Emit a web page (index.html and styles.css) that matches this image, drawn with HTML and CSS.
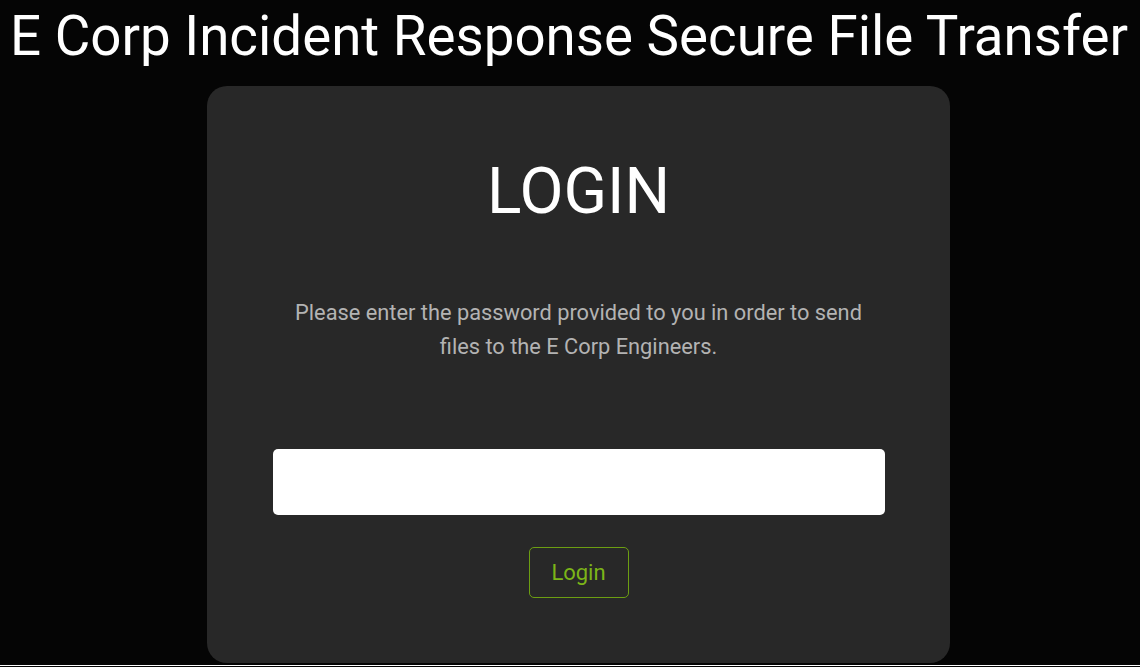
FILE: index.html
```html
<!DOCTYPE html>
<html>
<head>
<meta charset="utf-8">
<link rel="stylesheet" href="styles.css">
</head>
<body>
<div class="page">
  <h1 class="title">E Corp Incident Response Secure File Transfer</h1>
  <div class="card">
    <h2 class="card-title">LOGIN</h2>
    <p class="card-text">Please enter the password provided to you in order to send files to the E Corp Engineers.</p>
    <input class="password" type="password">
    <button class="login-btn" type="button">Login</button>
  </div>
</div>
<div class="rule"></div>
</body>
</html>
```
FILE: styles.css
```css
html, body {
  margin: 0;
  padding: 0;
  background: #050505;
  font-family: Roboto, "Liberation Sans", sans-serif;
}
.page {
  height: 665px;
  overflow: hidden;
  display: flex;
  flex-direction: column;
  align-items: center;
}
.title {
  margin: 0 2px 0 0;
  font-size: 54.7px;
  font-weight: 400;
  line-height: 72px;
  color: #ffffff;
  text-align: center;
  white-space: nowrap;
}
.card {
  margin-top: 14px;
  margin-left: 17px;
  width: 743px;
  box-sizing: border-box;
  padding: 68px 65px 65px;
  background: #282828;
  border-radius: 20px;
  display: flex;
  flex-direction: column;
  align-items: center;
  flex-shrink: 0;
}
.card-title {
  margin: 0;
  font-size: 64px;
  font-weight: 400;
  line-height: 75px;
  color: #ffffff;
}
.card-text {
  margin: 67px 0 0;
  max-width: 612px;
  font-size: 21.8px;
  line-height: 34px;
  color: #b3b3b3;
  text-align: center;
}
.password {
  margin-top: 85px;
  width: 612px;
  height: 66px;
  box-sizing: border-box;
  border: none;
  border-radius: 5px;
  background: #ffffff;
  outline: none;
}
.login-btn {
  margin-top: 32px;
  width: 100px;
  height: 51px;
  box-sizing: border-box;
  border: 1px solid #6c9e12;
  border-radius: 5px;
  background: transparent;
  color: #7cb518;
  font-family: Roboto, "Liberation Sans", sans-serif;
  font-size: 22px;
  padding: 0;
}
.rule {
  height: 1px;
  background: #ffffff;
}
```
